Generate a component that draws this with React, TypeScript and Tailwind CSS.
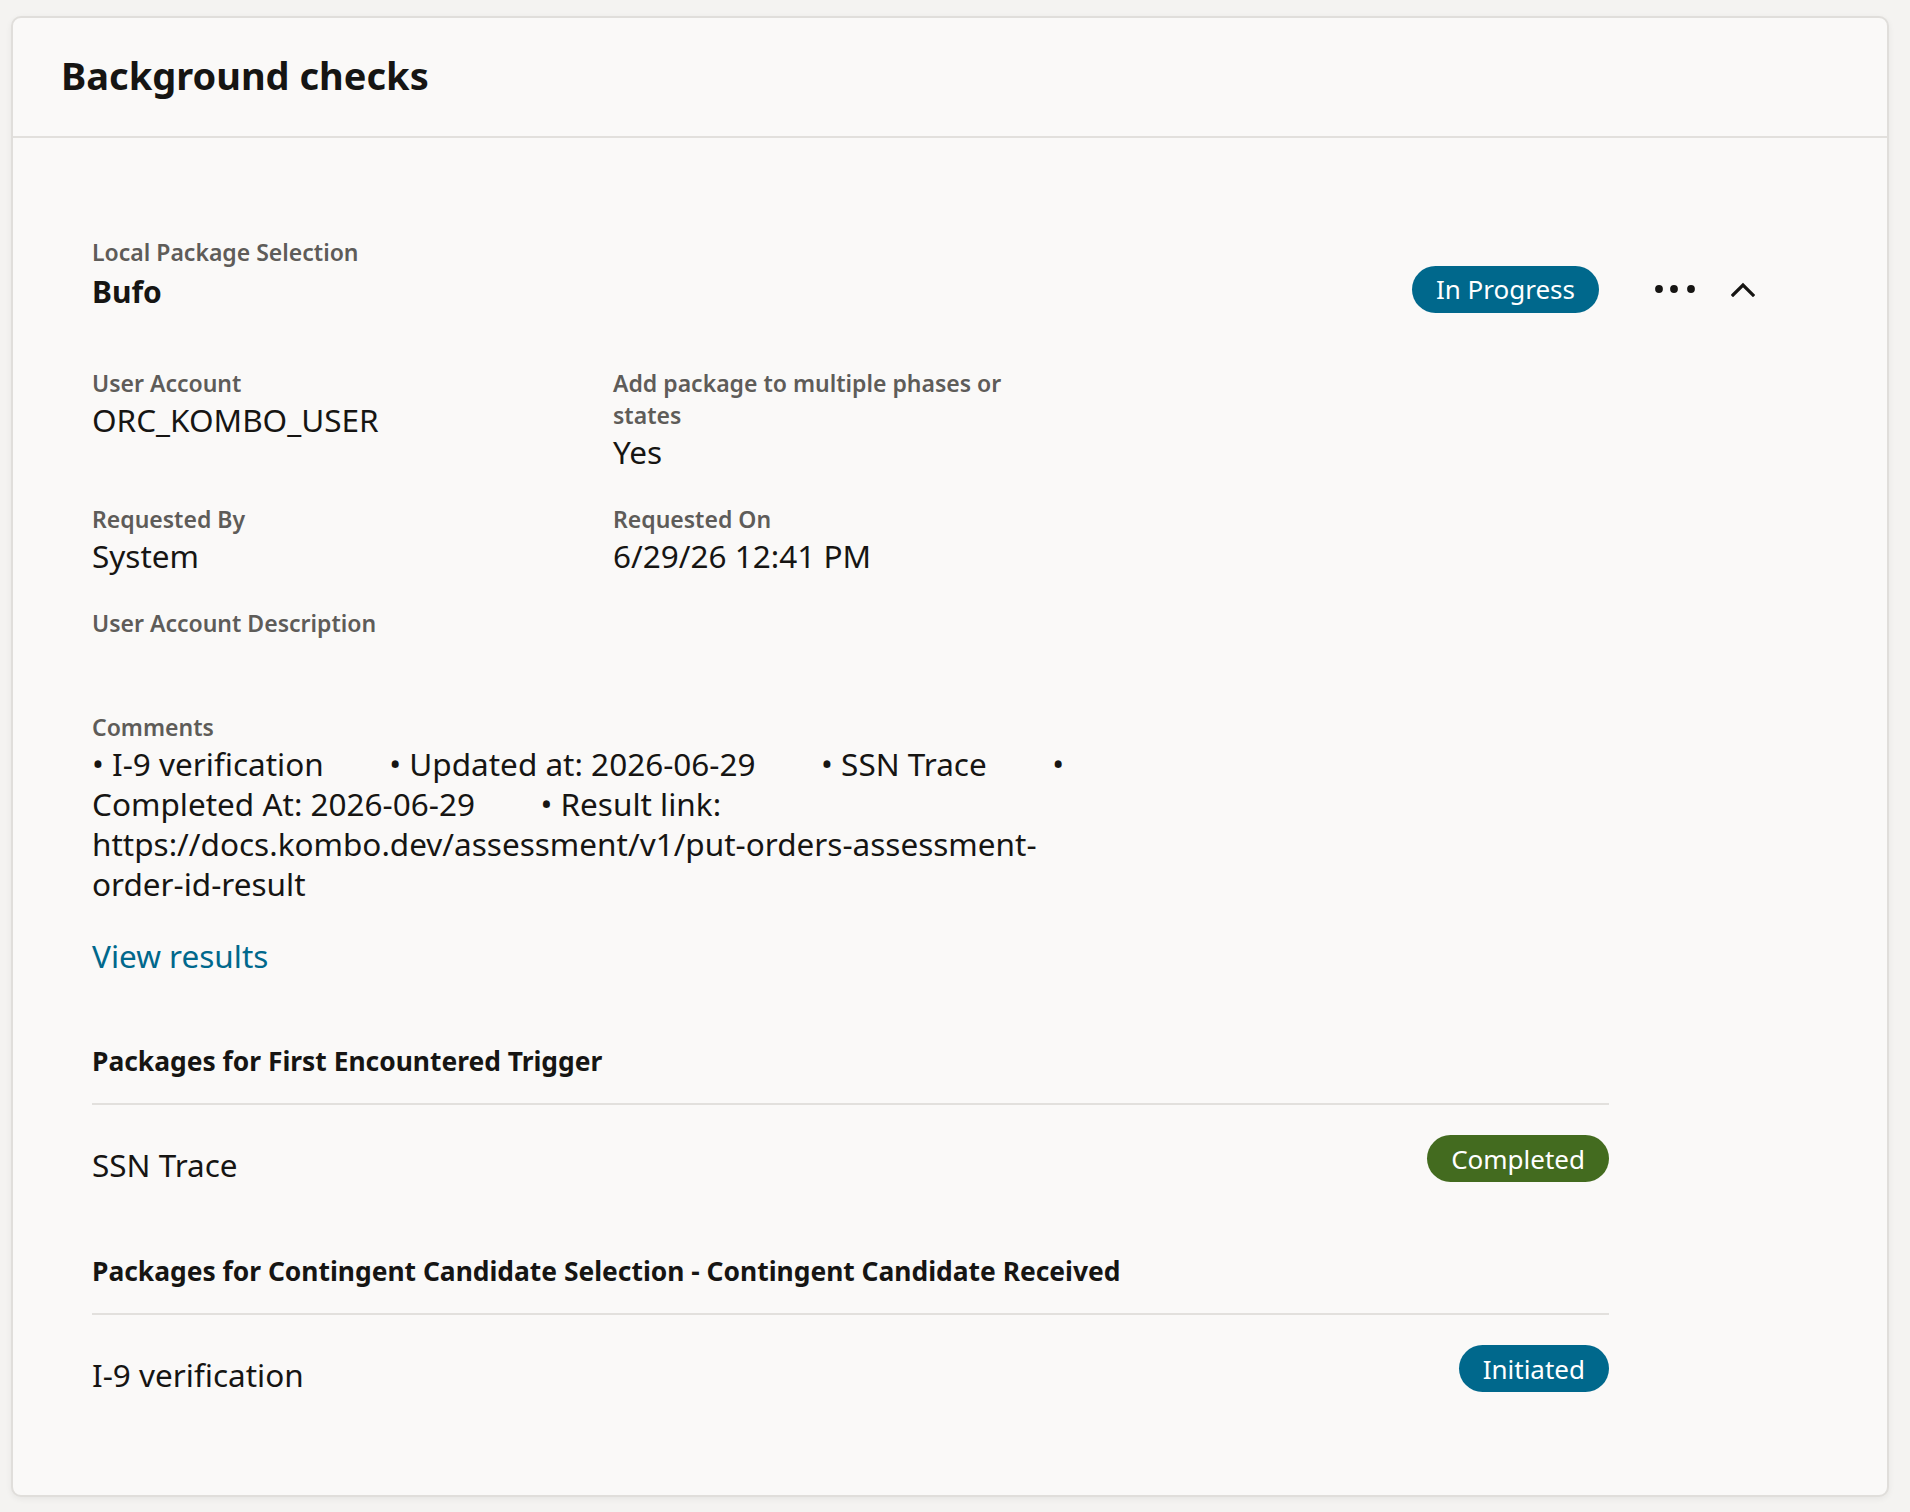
import React from "react";

const FONT = { fontFamily: '"Noto Sans", "Open Sans", sans-serif' };

function Label({ children }: { children: React.ReactNode }) {
  return (
    <div className="text-[23px] leading-[32px] font-semibold text-[#5e5c59]">
      {children}
    </div>
  );
}

function Value({ children }: { children?: React.ReactNode }) {
  return (
    <div className="mt-[1px] min-h-[40px] text-[31.5px] leading-[40px] text-[#161513]">
      {children}
    </div>
  );
}

function Field({ label, value }: { label: React.ReactNode; value?: React.ReactNode }) {
  return (
    <div>
      <Label>{label}</Label>
      <Value>{value}</Value>
    </div>
  );
}

function Badge({ tone, children }: { tone: "blue" | "green"; children: React.ReactNode }) {
  const color = tone === "green" ? "bg-[#436b1f]" : "bg-[#00688c]";
  return (
    <span
      className={`inline-flex h-[47px] items-center rounded-full px-[24px] text-[26px] leading-none text-white ${color}`}
    >
      {children}
    </span>
  );
}

function MoreIcon() {
  return (
    <svg width="40" height="10" viewBox="0 0 40 10" fill="#161513">
      <circle cx="4" cy="5" r="3.9" />
      <circle cx="19" cy="5" r="3.9" />
      <circle cx="36" cy="5" r="3.9" />
    </svg>
  );
}

function ChevronUpIcon() {
  return (
    <svg width="24" height="15" viewBox="0 0 24 15" fill="none">
      <polyline
        points="2,13 12,3 22,13"
        stroke="#161513"
        strokeWidth="3.2"
        strokeLinecap="square"
        strokeLinejoin="miter"
      />
    </svg>
  );
}

function PackageGroup({
  title,
  item,
  status,
  tone,
}: {
  title: string;
  item: string;
  status: string;
  tone: "blue" | "green";
}) {
  return (
    <div>
      <div className="border-b-2 border-[#e2e0dd] pb-[26px] text-[26.4px] leading-[31px] font-bold text-[#161513]">
        {title}
      </div>
      <div className="flex items-start justify-between">
        <div className="mt-[40px] text-[31.5px] leading-[40px] text-[#161513]">{item}</div>
        <div className="mt-[30px]">
          <Badge tone={tone}>{status}</Badge>
        </div>
      </div>
    </div>
  );
}

const GAP = "        ";
const comments =
  `• I-9 verification${GAP}• Updated at: 2026-06-29${GAP}• SSN Trace${GAP}• Completed At: 2026-06-29${GAP}• Result link: https://docs.kombo.dev/assessment/v1/put-orders-assessment-order-id-result`;

export default function App() {
  return (
    <div className="min-h-screen bg-[#f4f3f1] pl-[11px] pt-[16px]" style={FONT}>
      <div className="w-[1878px] rounded-[10px] border-2 border-[#e0dedb] bg-[#faf9f8] shadow-[0_2px_6px_rgba(0,0,0,0.06)]">
        <header className="flex h-[120px] items-center border-b-2 border-[#e2e0dd] pb-[5px] pl-[48px]">
          <h1 className="text-[38px] leading-none font-bold text-[#161513]">Background checks</h1>
        </header>

        <div className="pl-[79px] pr-[40px] pb-[100px] pt-[98px]">
          <div className="flex items-start justify-between pr-[80px]">
            <div>
              <Label>Local Package Selection</Label>
              <div className="mt-[4px] text-[30px] leading-[40px] font-bold text-[#161513]">Bufo</div>
            </div>
            <div className="mt-[29px] flex items-center">
              <Badge tone="blue">In Progress</Badge>
              <button className="ml-[52px] flex h-[48px] w-[48px] items-center justify-center">
                <MoreIcon />
              </button>
              <button className="ml-[20px] flex h-[48px] w-[48px] items-center justify-center">
                <ChevronUpIcon />
              </button>
            </div>
          </div>

          <div className="mt-[54px] grid w-[1000px] grid-cols-[521px_440px] gap-y-[31px]">
            <Field label="User Account" value="ORC_KOMBO_USER" />
            <Field label="Add package to multiple phases or states" value="Yes" />
            <Field label="Requested By" value="System" />
            <Field label="Requested On" value="6/29/26 12:41 PM" />
            <div className="col-span-2">
              <Field label="User Account Description" />
            </div>
            <div className="col-span-2 w-[1000px]">
              <Label>Comments</Label>
              <div className="mt-[1px] whitespace-pre-wrap text-[31.5px] leading-[40px] text-[#161513]">
                {comments}
              </div>
            </div>
            <div className="pt-[1px]">
              <a href="#" className="text-[31.5px] leading-[40px] text-[#00688c]">
                View results
              </a>
            </div>
          </div>

          <div className="mt-[70px] w-[1517px]">
            <PackageGroup
              title="Packages for First Encountered Trigger"
              item="SSN Trace"
              status="Completed"
              tone="green"
            />
            <div className="mt-[71px]">
              <PackageGroup
                title="Packages for Contingent Candidate Selection - Contingent Candidate Received"
                item="I-9 verification"
                status="Initiated"
                tone="blue"
              />
            </div>
          </div>
        </div>
      </div>
    </div>
  );
}
